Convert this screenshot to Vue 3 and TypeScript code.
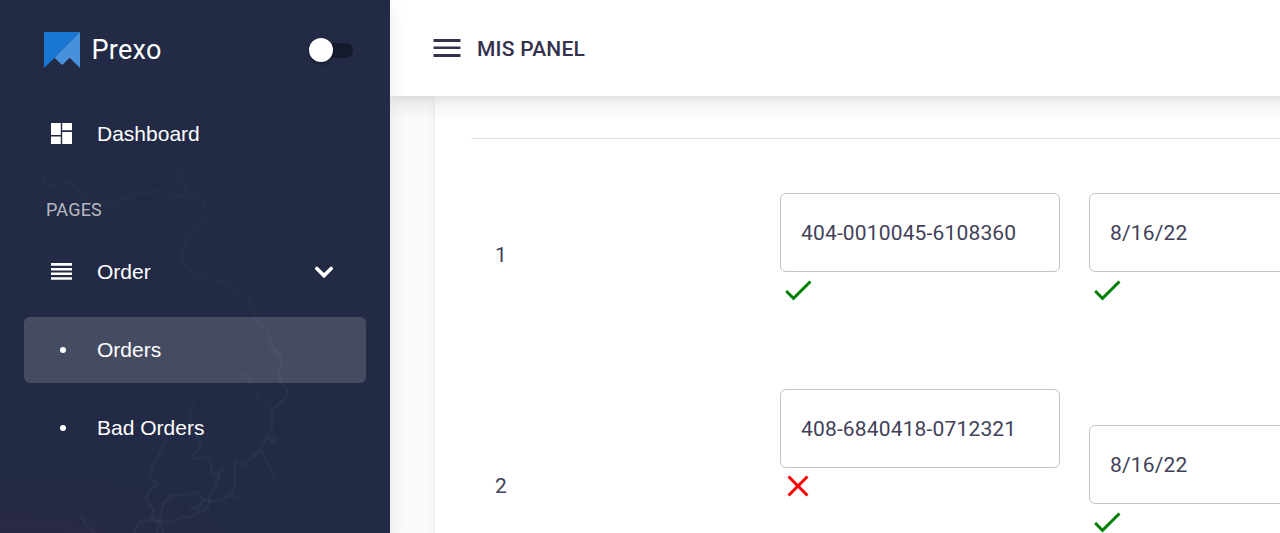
<script setup lang="ts">
import { ref } from 'vue'

interface Field {
  value: string
  valid: boolean
  tall?: boolean
}

interface Row {
  id: number
  fields: Field[]
}

const compact = ref(false)

const rows: Row[] = [
  {
    id: 1,
    fields: [
      { value: '404-0010045-6108360', valid: true },
      { value: '8/16/22', valid: true },
    ],
  },
  {
    id: 2,
    fields: [
      { value: '408-6840418-0712321', valid: false, tall: true },
      { value: '8/16/22', valid: true },
    ],
  },
]

const subItems = [
  { label: 'Orders', active: true },
  { label: 'Bad Orders', active: false },
]
</script>

<template>
  <div class="layout">
    <aside class="sidebar">
      <svg class="map" width="390" height="533" viewBox="0 0 390 533" aria-hidden="true">
        <g class="upper" transform="translate(0 160) scale(.33333)">
          <path d="M125 35L132 62L145 80L172 72L200 68L220 74L235 90L250 115L265 130L350 128L372 116L410 98L440 98L480 93L508 98L530 108L595 110L612 128L620 150L632 168L595 190L582 207L565 230L552 265L543 300L560 322L590 345L630 358L680 370L700 400L735 432L762 450L770 485L800 510L810 540L808 545" />
          <path d="M560 20L538 40L548 72L570 105M755 395L748 430" />
        </g>
        <g transform="translate(0 340) scale(.33333)">
          <path d="M808 5L820 25L840 45L844 70L836 95L842 122L865 155L850 180L832 195L815 215L817 260L800 290L785 320L760 350L725 375L703 360L706 430L695 460L665 482L635 485L610 480L590 455L570 463L515 468L490 490L482 520L480 545" />
          <path class="thin" d="M720 95L745 115L770 148L778 180L800 190L812 215M575 170L578 192L567 225L580 260M745 458L715 476L675 470" />
          <path d="M805 290L820 310L824 288M785 330L800 365L817 395L826 425" />
          <path d="M580 260L592 292L603 322L575 345L588 357L620 350L633 367L635 398L657 407L645 440L630 472L624 502L595 516L572 530L550 531L520 545L478 545L428 540L412 556L402 579" />
          <path d="M500 290L488 325L465 365L446 412L473 431L447 452L437 478L460 508L455 532L480 548L492 579M480 545L468 579M668 382L655 407M610 480L596 502L568 508M243 526L258 555L285 579" />
        </g>
      </svg>

      <div class="brand">
        <svg width="36" height="36" viewBox="0 0 36 36">
          <path d="M0 0H36L10.5 26L0 36Z" fill="#1976d2" />
          <path d="M36 0V36L25.7 25.7L18.2 33L10.5 25.7Z" fill="#4791db" />
        </svg>
        <span class="brand-name">Prexo</span>
        <button class="switch" :class="{ on: compact }" @click="compact = !compact"><i></i></button>
      </div>

      <nav>
        <a class="item">
          <svg class="item-icon" width="21" height="23" viewBox="0 0 21 23">
            <path d="M0 0h9.8v12H0zM0 13.6h9.8V21H0zM11.2 0H21v7.3h-9.8zM11.2 9H21v12h-9.8z" />
          </svg>
          <span>Dashboard</span>
        </a>
        <p class="section">PAGES</p>
        <a class="item">
          <svg class="item-icon" width="21" height="18" viewBox="0 0 21 18">
            <path d="M0 0h21v2.7H0zM0 4.9h21v2.5H0zM0 9.4h21v2.5H0zM0 14.2h21v2.6H0z" />
          </svg>
          <span>Order</span>
          <svg class="chevron" width="20" height="14" viewBox="0 0 20 14">
            <path d="M2.8 3.4L10 10.6L17.2 3.4" />
          </svg>
        </a>
        <a v-for="item in subItems" :key="item.label" class="item" :class="{ active: item.active }">
          <i class="dot"></i>
          <span>{{ item.label }}</span>
        </a>
      </nav>
    </aside>

    <main class="main">
      <header class="topbar">
        <svg width="28" height="18" viewBox="0 0 28 18">
          <path d="M.5 0h27v3H.5zM.5 7.4h27v2.5H.5zM.5 15h27v3H.5z" fill="#34314c" />
        </svg>
        <h1>MIS PANEL</h1>
      </header>
      <section class="card">
        <div class="table">
          <div v-for="row in rows" :key="row.id" class="row">
            <div class="number">{{ row.id }}</div>
            <div v-for="(field, i) in row.fields" :key="i" class="cell" :class="{ tall: field.tall }">
              <div class="field">{{ field.value }}</div>
              <svg width="36" height="36" viewBox="0 0 24 24">
                <path v-if="field.valid" fill="green" d="M9 16.17L4.83 12l-1.42 1.41L9 19 21 7l-1.41-1.41z" />
                <path v-else fill="red" d="M19 6.41L17.59 5 12 10.59 6.41 5 5 6.41 10.59 12 5 17.59 6.41 19 12 13.41 17.59 19 19 17.59 13.41 12z" />
              </svg>
            </div>
          </div>
        </div>
      </section>
    </main>
  </div>
</template>

<style>
body {
  overflow: hidden;
}
</style>

<style scoped>
* {
  box-sizing: border-box;
}
.layout {
  display: flex;
  height: 533px;
  overflow: hidden;
  font-family: Roboto, sans-serif;
  color: #34314c;
  background: #fafafa;
}
.sidebar {
  position: relative;
  z-index: 3;
  flex: 0 0 390px;
  padding: 24px;
  color: #fff;
  background:
    radial-gradient(ellipse 240px 80px at 5% 103%, rgba(48, 39, 70, 0.55), transparent),
    #222a45;
  box-shadow: 0 7.5px 7.5px -4.5px rgba(0, 0, 0, 0.06), 0 12px 15px 1.5px rgba(0, 0, 0, 0.042),
    0 4.5px 21px 3px rgba(0, 0, 0, 0.036);
}
.map {
  position: absolute;
  left: 0;
  top: 0;
  fill: none;
  stroke: #8c98b4;
  stroke-opacity: 0.065;
  stroke-width: 9;
  stroke-linejoin: round;
}
.map .upper,
.map .thin {
  stroke-opacity: 0.04;
}
.brand {
  position: relative;
  display: flex;
  align-items: center;
  height: 52px;
  padding: 0 13px 0 20px;
}
.brand-name {
  margin-left: 11.5px;
  font-size: 27px;
  line-height: 40px;
  letter-spacing: 0.25px;
}
.switch {
  display: flex;
  align-items: center;
  width: 44px;
  height: 15px;
  margin-left: auto;
  padding: 0;
  border: 0;
  border-radius: 8px;
  background: linear-gradient(90deg, transparent 12px, #151a2b 12px);
}
.switch i {
  width: 24px;
  height: 24px;
  flex: none;
  border-radius: 50%;
  background: #fff;
  box-shadow: 0 2px 3px rgba(0, 0, 0, 0.3);
}
.switch.on i {
  margin-left: 20px;
}
nav {
  position: relative;
  margin-top: 25px;
}
.item {
  display: flex;
  align-items: center;
  height: 66px;
  margin-bottom: 12px;
  padding: 0 32px 0 27px;
  border-radius: 6px;
  font-family: "Liberation Sans", Arial, sans-serif;
  font-size: 21px;
}
.item.active {
  background: rgba(255, 255, 255, 0.16);
}
.item-icon {
  margin-right: 25px;
  fill: #fff;
}
.chevron {
  margin-left: auto;
  fill: none;
  stroke: #fff;
  stroke-width: 3.6;
  stroke-linecap: round;
}
.dot {
  width: 6px;
  height: 6px;
  margin: 0 31px 0 9px;
  border-radius: 50%;
  background: #fff;
}
.section {
  margin: 0;
  padding: 18px 0 0 22px;
  height: 60px;
  font-size: 18px;
  line-height: 26px;
  letter-spacing: 0.2px;
  color: rgba(255, 255, 255, 0.68);
}
.main {
  flex: 1;
  min-width: 0;
  margin-right: -60px;
}
.topbar {
  position: relative;
  z-index: 2;
  display: flex;
  align-items: center;
  height: 96px;
  padding-left: 43px;
  background: #fff;
  box-shadow: 0 7.5px 7.5px -4.5px rgba(0, 0, 0, 0.06), 0 12px 15px 1.5px rgba(0, 0, 0, 0.042),
    0 4.5px 21px 3px rgba(0, 0, 0, 0.036);
}
h1 {
  margin: 0 0 0 16px;
  padding-top: 2px;
  font-size: 21px;
  font-weight: 500;
  line-height: 32px;
  letter-spacing: 0.22px;
}
.card {
  height: 600px;
  margin-left: 45px;
  padding: 42px 0 0 36px;
  background: #fff;
  box-shadow: 0 4.5px 4.5px -3px rgba(0, 0, 0, 0.06), 0 4.5px 6px rgba(0, 0, 0, 0.042),
    0 1.5px 12px rgba(0, 0, 0, 0.036);
}
.table {
  width: 940px;
  border-top: 1px solid #e0e0e0;
}
.row {
  display: grid;
  grid-template-columns: 309px 309px 309px;
  align-items: center;
  height: 232px;
  font-size: 21px;
  letter-spacing: 0.16px;
  color: #423f59;
}
.number {
  padding: 0 0 2px 24px;
}
.row:first-child .number {
  padding-bottom: 0;
}
.cell {
  height: 124px;
}
.cell.tall {
  height: 196px;
}
.field {
  display: flex;
  align-items: center;
  width: 280px;
  height: 79px;
  padding-left: 20px;
  border: 1px solid #c4c4c4;
  border-radius: 6px;
}
.cell svg {
  display: block;
}
</style>
